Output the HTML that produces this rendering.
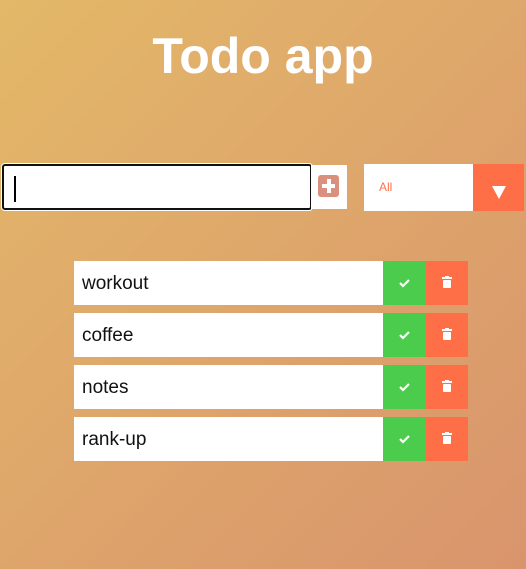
<!DOCTYPE html>
<html><head><style>
html,body{margin:0;padding:0}
body{width:526px;height:569px;overflow:hidden;position:relative;background:linear-gradient(135deg,#e3b868 0%,#dea66b 50%,#d9946c 100%);font-family:"Liberation Sans",sans-serif}
h1{position:absolute;left:0;width:526px;top:27px;margin:0;text-align:center;color:#fff;font-size:50px;font-weight:bold;line-height:58px}
.inp{position:absolute;left:2px;top:164px;width:306px;height:42px;background:#fff;border:2px solid #111;border-radius:3px;box-shadow:0 0 0 1px #fff}
.caret{position:absolute;left:10px;top:10px;width:2px;height:26px;background:#000}
.add{position:absolute;left:311px;top:165px;width:36px;height:44px;background:#fff}
.add .sq{position:absolute;left:7px;top:10px;width:21px;height:22px;border-radius:3px;background:#da907c}
.add .h{position:absolute;left:4px;top:9px;width:13px;height:4px;background:#fff}
.add .v{position:absolute;left:8.5px;top:4px;width:4px;height:14px;background:#fff}
.sel{position:absolute;left:364px;top:164px;width:160px;height:47px;background:#fff}
.sel span{position:absolute;left:15px;top:16px;font-size:12px;color:#ff6f47}
.sel .ar{position:absolute;left:109px;top:0;width:51px;height:47px;background:#ff6f47}
.sel .ar i{position:absolute;left:19px;top:22px;border-left:7px solid transparent;border-right:7px solid transparent;border-top:13px solid #fff}
.row{position:absolute;left:74px;width:394px;height:44px;background:#fff}
.row span{position:absolute;left:8px;top:12px;font-size:19px;color:#111}
.ok{position:absolute;left:309px;top:0;width:43px;height:44px;background:#4ccc4c}
.del{position:absolute;left:352px;top:0;width:42px;height:44px;background:#ff6f47}
.ok svg,.del svg{position:absolute;left:15px;top:15px}
</style></head><body>
<h1>Todo app</h1>
<div class="inp"><div class="caret"></div></div>
<div class="add"><div class="sq"><div class="h"></div><div class="v"></div></div></div>
<div class="sel"><span>All</span><div class="ar"><i></i></div></div>
<div class="row" style="top:261px"><span>workout</span><div class="ok"><svg width="13" height="13" viewBox="0 0 13 13"><path d="M2 7l3 3 6-6" stroke="#fff" stroke-width="2.2" fill="none"/></svg></div><div class="del"><svg width="12" height="13" viewBox="0 0 12 13"><rect x="1" y="1" width="10" height="2" fill="#fff"/><rect x="4" y="0" width="4" height="2" fill="#fff"/><rect x="2" y="4" width="8" height="8" rx="1" fill="#fff"/></svg></div></div>
<div class="row" style="top:313px"><span>coffee</span><div class="ok"><svg width="13" height="13" viewBox="0 0 13 13"><path d="M2 7l3 3 6-6" stroke="#fff" stroke-width="2.2" fill="none"/></svg></div><div class="del"><svg width="12" height="13" viewBox="0 0 12 13"><rect x="1" y="1" width="10" height="2" fill="#fff"/><rect x="4" y="0" width="4" height="2" fill="#fff"/><rect x="2" y="4" width="8" height="8" rx="1" fill="#fff"/></svg></div></div>
<div class="row" style="top:365px"><span>notes</span><div class="ok"><svg width="13" height="13" viewBox="0 0 13 13"><path d="M2 7l3 3 6-6" stroke="#fff" stroke-width="2.2" fill="none"/></svg></div><div class="del"><svg width="12" height="13" viewBox="0 0 12 13"><rect x="1" y="1" width="10" height="2" fill="#fff"/><rect x="4" y="0" width="4" height="2" fill="#fff"/><rect x="2" y="4" width="8" height="8" rx="1" fill="#fff"/></svg></div></div>
<div class="row" style="top:417px"><span>rank-up</span><div class="ok"><svg width="13" height="13" viewBox="0 0 13 13"><path d="M2 7l3 3 6-6" stroke="#fff" stroke-width="2.2" fill="none"/></svg></div><div class="del"><svg width="12" height="13" viewBox="0 0 12 13"><rect x="1" y="1" width="10" height="2" fill="#fff"/><rect x="4" y="0" width="4" height="2" fill="#fff"/><rect x="2" y="4" width="8" height="8" rx="1" fill="#fff"/></svg></div></div>
</body></html>
